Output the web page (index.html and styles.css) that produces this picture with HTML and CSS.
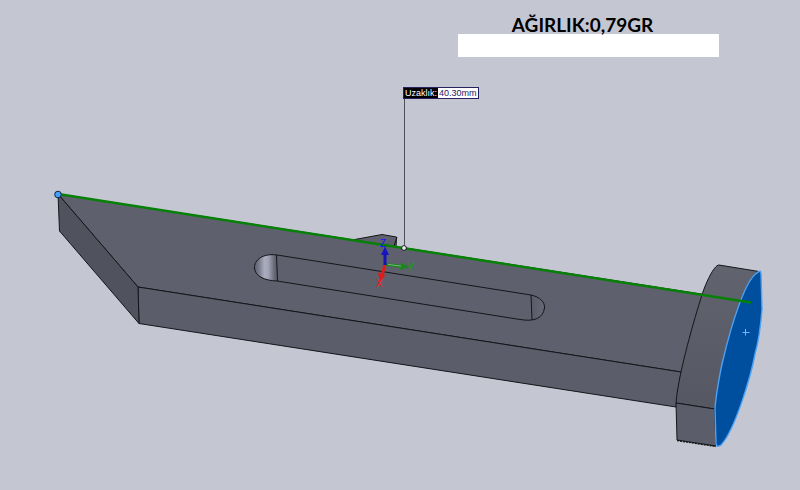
FILE: index.html
```
<!DOCTYPE html>
<html lang="tr">
<head>
<meta charset="utf-8">
<meta name="viewport" content="width=device-width, initial-scale=1">
<title>Ağırlık</title>
<link rel="stylesheet" href="styles.css">
</head>
<body>
<main class="viewport">
  <svg class="model" viewBox="0 0 800 490" role="img" aria-label="Model">
    <defs>
      <linearGradient id="slot" x1="254" x2="277" y1="0" y2="0" gradientUnits="userSpaceOnUse">
        <stop offset="0" stop-color="#5b5e6b"/>
        <stop offset=".2" stop-color="#747786"/>
        <stop offset=".45" stop-color="#abacbe"/>
        <stop offset=".62" stop-color="#a3a4b5"/>
        <stop offset=".9" stop-color="#646673"/>
        <stop offset="1" stop-color="#5b5e6b"/>
      </linearGradient>
      <linearGradient id="slot-end" x1="531" x2="545" y1="0" y2="0" gradientUnits="userSpaceOnUse">
        <stop offset="0" stop-color="#595b68"/>
        <stop offset="1" stop-color="#666875"/>
      </linearGradient>
      <linearGradient id="rim" x1="0" x2="0" y1="265" y2="409" gradientUnits="userSpaceOnUse">
        <stop offset="0" stop-color="#61636f"/>
        <stop offset="1" stop-color="#555762"/>
      </linearGradient>
    </defs>

    <g class="edge">
      <path class="face" d="M352 240 382 234.500 396.500 237 396 248Z"/>
      <path class="thin" d="M397 237 394 246"/>
      <path class="face" d="M58 194 720 297 681 372 138 287Z"/>
      <path class="front" d="M138 287 681 372 676 407 139 323.500Z"/>
      <path class="shade" d="M58 194 138 287 139 323.500 59.500 231Z"/>

      <path fill="url(#slot)" stroke="none" d="M277 255C263 253 254 260 254.500 268C255 276 264 280.500 277.500 281Z"/>
      <path fill="url(#slot-end)" stroke="none" d="M531 295C540 297 545 302 544.500 308C543 316 538 319 532 320Z"/>
      <path fill="none" d="M277 255 531 295C540 297 545 302 544.500 308C543 318 535 322 520 319.500L277 281C264 280.500 255 276 254.500 268C254 260 263 253 277 255ZM276.500 255 277.500 281M531 295 532 320"/>

      <path fill="url(#rim)" d="M759 271.500 719 265C714 265 705 284 701 298C691 330 678 377 676 403L714.500 409Z"/>
      <path class="front" d="M676 403 714.500 409 716 446 677 440Z"/>
      <path class="serration" d="M677 440.500 716 446.500"/>
    </g>

    <path class="selected" d="M715 409C715.500 398 720 372 723 360C731 326 745 280 757 273Q761 269 761 274L762 309Q760 336 755 354C751 376 735 430 721 445Q717 448 716 444Z"/>
    <path class="cross" d="M742.500 332.500H749.500M745.500 329V335.500"/>
    <path class="measure" d="M58 194 751 302.500"/>
    <circle class="start" cx="58" cy="194.500" r="3.300"/>
    <path class="leader" d="M404.500 98V245"/>
    <circle class="middle" cx="404" cy="248" r="2.400"/>

    <g class="axes">
      <path stroke="#1b861f" stroke-width="3" d="M386 264.500 403 266.500"/>
      <path fill="#1b861f" d="M401 262.500 409.500 267 400 270Z"/>
      <path stroke="#7ab47c" d="M388 264.500 401 266"/>
      <path stroke="#df1b1b" stroke-width="3" d="M385 265 382 275"/>
      <path fill="#df1b1b" d="M378 272.500 385.500 275 380 282Z"/>
      <path stroke="#1714b4" stroke-width="3" d="M385 265V253"/>
      <path fill="#1714c4" d="M385 246.500 389 255H381Z"/>
      <text class="axis-z" x="380" y="247">Z</text>
      <text class="axis-y" x="408" y="271">Y</text>
      <text class="axis-x" x="376" y="287">X</text>
    </g>
  </svg>

  <section class="note">
    <h1 class="weight">AĞIRLIK:0,79GR</h1>
    <div class="blank"></div>
  </section>

  <dl class="callout">
    <dt>Uzaklık:</dt>
    <dd>40.30mm</dd>
  </dl>
</main>
</body>
</html>
```

FILE: styles.css
```
* {
  box-sizing: border-box;
}

body {
  margin: 0;
  background: #c4c7d2;
}

.viewport {
  position: relative;
}

.model {
  display: block;
  width: 100%;
  height: auto;
}

.edge {
  stroke: #15161a;
  stroke-width: 1;
  stroke-linejoin: round;
}

.face {
  fill: #5e616d;
}

.front {
  fill: #5b5e6a;
}

.shade {
  fill: #50525e;
}

.thin {
  fill: none;
}

.serration {
  stroke-width: 1.5;
  stroke-dasharray: 2 1;
}

.selected {
  fill: #004f9e;
  stroke: #4ba2f6;
  stroke-width: 1.4;
}

.cross {
  fill: none;
  stroke: #70b8ff;
}

.measure {
  stroke: #078007;
  stroke-width: 2.5;
}

.start {
  fill: #46a0fa;
  stroke: #102443;
}

.leader {
  stroke: #505158;
}

.middle {
  fill: #ececec;
  stroke: #18191c;
}

.axes {
  font: 10px "Liberation Sans", Arial, sans-serif;
}

.axis-z {
  fill: #1010ff;
}

.axis-y {
  fill: #1b961f;
  stroke: #1b961f;
  stroke-width: 0.4;
}

.axis-x {
  fill: #ff1818;
}

.note {
  position: absolute;
  top: 16px;
  left: 57.25%;
  width: 32.625%;
}

.weight {
  margin: 0;
  padding-right: 12px;
  color: #000;
  font: 700 19px/18px Lato, "Open Sans", sans-serif;
  text-align: center;
  white-space: nowrap;
}

.blank {
  height: 23px;
  background: #fff;
}

.callout {
  position: absolute;
  top: 87px;
  left: 50.375%;
  display: flex;
  margin: 0;
  border: 1px solid #25235f;
  background: #fff;
  font: 9px/10px "Liberation Sans", Arial, sans-serif;
  white-space: nowrap;
}

.callout dt {
  padding: 0 1px;
  background: #000;
  color: #fff;
}

.callout dd {
  margin: 0;
  padding: 0 1px;
  color: #25235f;
}
```
